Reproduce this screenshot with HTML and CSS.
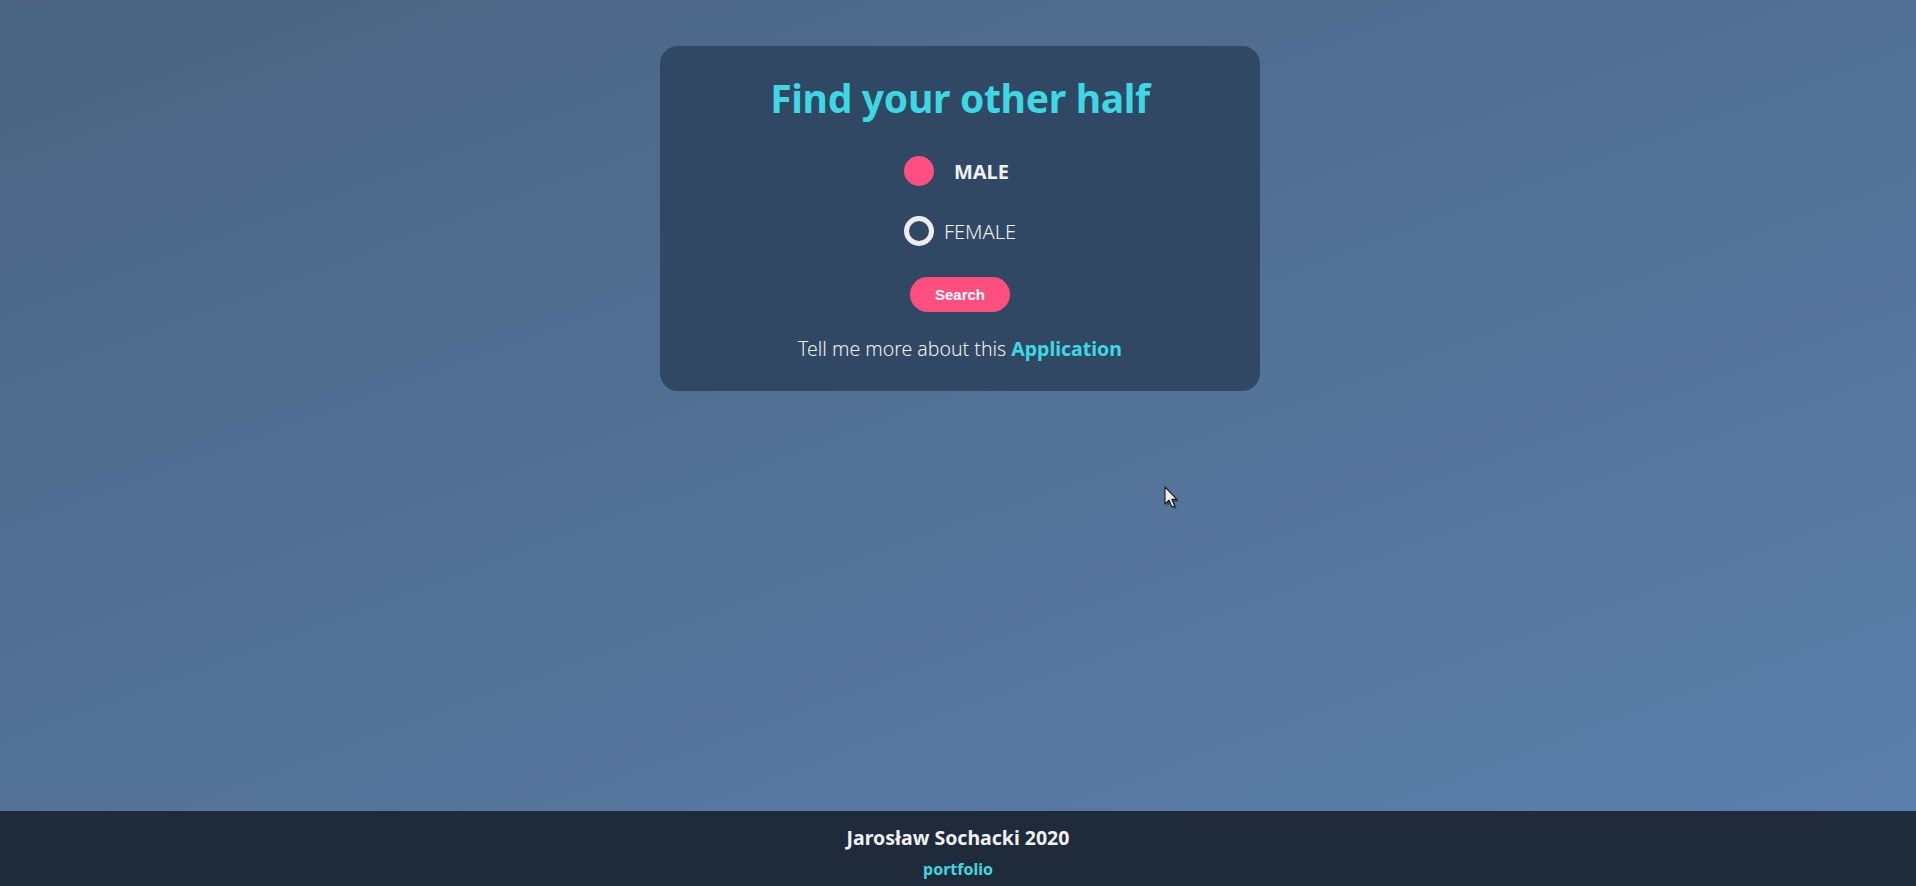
FILE: index.html
```html
<!DOCTYPE html>
<html lang="en">
<head>
<meta charset="utf-8">
<title>Find your other half</title>
<link rel="stylesheet" href="styles.css">
</head>
<body>
<main class="page">
  <section class="card">
    <h1 class="title">Find your other half</h1>
    <form class="form">
      <div class="options">
        <label class="option option--checked">
          <input class="radio-input" type="radio" name="gender" value="male" checked>
          <span class="radio radio--on"></span>
          <span class="option-text option-text--bold">MALE</span>
        </label>
        <label class="option">
          <input class="radio-input" type="radio" name="gender" value="female">
          <span class="radio radio--off"></span>
          <span class="option-text">FEMALE</span>
        </label>
      </div>
      <button class="search" type="button">Search</button>
    </form>
    <p class="more">Tell me more about this <a class="more-link" href="#">Application</a></p>
  </section>
  <svg class="cursor" width="16" height="24" viewBox="0 0 16 24" aria-hidden="true">
    <path d="M2 2 L2 19 L6 15.2 L9 22 L11.6 20.9 L8.8 14.4 L14 14.4 Z" fill="#000" opacity="0.35" transform="translate(1.2 1.2)"/>
    <path d="M1 1 L1 18 L5 14.2 L8 21 L10.6 19.9 L7.8 13.4 L13 13.4 Z" fill="#ececec" stroke="#1a1a1a" stroke-width="1.1" stroke-linejoin="round"/>
  </svg>
</main>
<footer class="footer">
  <p class="author">Jarosław Sochacki 2020</p>
  <a class="portfolio" href="#">portfolio</a>
</footer>
</body>
</html>
```

FILE: styles.css
```css
* { box-sizing: border-box; }
html, body { height: 100%; }
body {
  margin: 0;
  display: flex;
  flex-direction: column;
  font-family: "Noto Sans", "Open Sans", sans-serif;
  background: linear-gradient(160deg, #4a6482 0%, #5b80ac 100%);
  color: #f0f0f0;
}
.page {
  flex: 1;
  position: relative;
  display: flex;
  flex-direction: column;
  align-items: center;
  padding: 46px 0 0 4px;
}
.card {
  width: 600px;
  background: #314865;
  border-radius: 18px;
  padding: 26px 0 29px;
  display: flex;
  flex-direction: column;
  align-items: center;
}
.title {
  margin: 0;
  font-size: 39px;
  line-height: 52px;
  font-weight: 700;
  color: #3ed8e2;
  letter-spacing: -0.3px;
}
.form {
  display: flex;
  flex-direction: column;
  align-items: center;
  margin-top: 32px;
}
.options {
  display: flex;
  flex-direction: column;
  align-items: flex-start;
  gap: 30px;
  margin-left: 0;
}
.option {
  display: flex;
  align-items: center;
  height: 30px;
  cursor: pointer;
}
.radio-input { display: none; }
.radio {
  width: 30px;
  height: 30px;
  border-radius: 50%;
  flex: none;
}
.radio--on { background: #ff4f81; }
.radio--off { border: 5px solid #eeeeee; }
.option-text {
  margin-left: 10px;
  font-size: 20px;
  font-weight: 300;
  color: #f0f0f0;
}
.option-text--bold {
  margin-left: 20px;
  font-size: 20px;
  font-weight: 700;
}
.search {
  margin-top: 31px;
  width: 100px;
  height: 35px;
  border: none;
  border-radius: 18px;
  background: #ff4f81;
  color: #fff;
  font-family: "Liberation Sans", Arial, sans-serif;
  font-weight: 700;
  font-size: 15px;
  cursor: pointer;
}
.more {
  margin: 24px 0 0;
  font-size: 19.5px;
  line-height: 26px;
  font-weight: 300;
  color: #f0f0f0;
}
.more-link {
  color: #3ed8e2;
  font-weight: 700;
  text-decoration: none;
}
.cursor {
  position: absolute;
  left: 1164px;
  top: 486px;
}
.footer {
  height: 75px;
  background: #1f2b3a;
  display: flex;
  flex-direction: column;
  align-items: center;
  padding-top: 14px;
}
.author {
  margin: 0;
  font-size: 19.5px;
  line-height: 26px;
  font-weight: 700;
  color: #f0f0f0;
}
.portfolio {
  margin-top: 8px;
  font-size: 16px;
  line-height: 20px;
  font-weight: 700;
  color: #3ed8e2;
  text-decoration: none;
}
```
